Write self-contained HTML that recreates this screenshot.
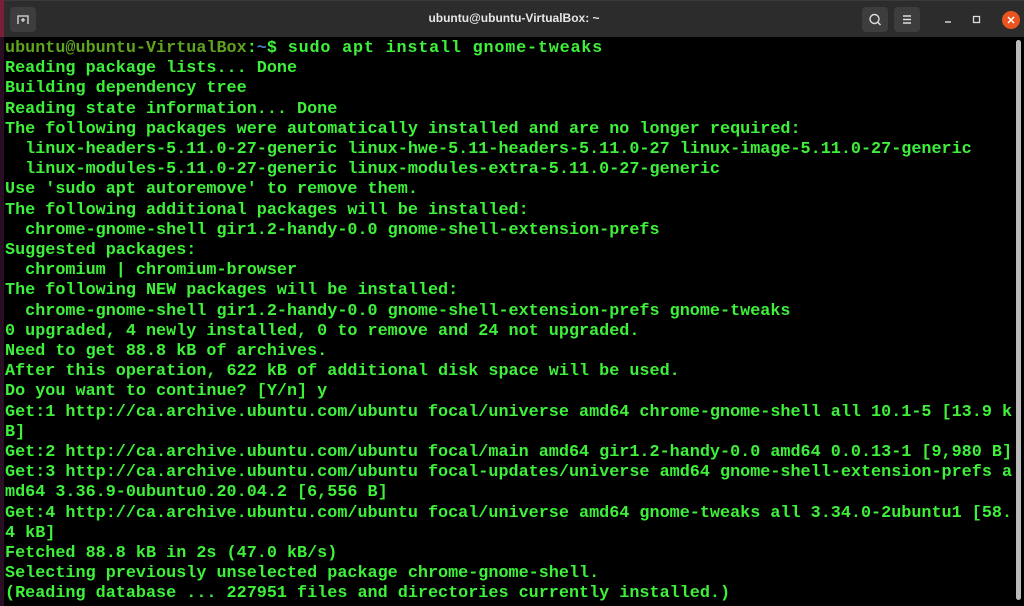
<!DOCTYPE html>
<html><head><meta charset="utf-8"><style>
html,body{margin:0;padding:0;width:1024px;height:606px;overflow:hidden;background:#000;}
.strip{position:absolute;left:0;top:0;width:4px;height:606px;background:#2a0f24;}
.strip2{position:absolute;left:0;top:0;width:4px;height:37px;background:#7a1f3a;}
.bar{position:absolute;left:4px;top:0;right:0;height:37px;background:#2c2c2c;border-top:1px solid #3a3a3a;box-sizing:border-box;}
.title{position:absolute;left:0;right:0;top:10px;text-align:center;color:#e6e6e6;font:bold 12px "Liberation Sans",sans-serif;}
.btn{position:absolute;top:6px;width:26px;height:25px;background:#3d3d3d;border-radius:4px;}
.term{position:absolute;left:5px;top:39px;margin:0;color:#3ef03a;font:bold 16.8px/20.2px "Liberation Mono",monospace;white-space:pre;}
.p{color:#5fa31f}.b{color:#4a7fc8}
.scroll{position:absolute;right:3px;top:40px;width:5px;height:560px;background:#bbb;border-radius:3px;}
</style></head><body>
<div class="strip"></div><div class="strip2"></div>
<div class="bar">
<div class="btn" style="left:6px"><svg width="26" height="25"><path d="M8 17V9h10v8M11 13h4M13 11v4" stroke="#ddd" stroke-width="1.3" fill="none"/></svg></div>
<div class="title">ubuntu@ubuntu-VirtualBox: ~</div>
<div class="btn" style="left:858px"><svg width="26" height="25"><circle cx="12.5" cy="12" r="4.5" stroke="#ddd" stroke-width="1.4" fill="none"/><path d="M15.5 15l3 3" stroke="#ddd" stroke-width="1.5"/></svg></div>
<div class="btn" style="left:890px"><svg width="26" height="25"><path d="M9 9h8M9 12.5h8M9 16h8" stroke="#ddd" stroke-width="1.4"/></svg></div>
<svg style="position:absolute;left:940px;top:8px" width="80" height="22"><path d="M1 13h6" stroke="#ddd" stroke-width="1.4"/><rect x="29.5" y="7.5" width="6" height="6" stroke="#ddd" stroke-width="1.3" fill="none"/><circle cx="67" cy="11" r="9" fill="#e95420"/><path d="M64 8l6 6M70 8l-6 6" stroke="#fff" stroke-width="1.5"/></svg>
</div>
<div class="scroll"></div>
<pre class="term"><span class="p">ubuntu@ubuntu-VirtualBox</span>:<span class="b">~</span>$<span style="letter-spacing:0.8px"> sudo apt install gnome-tweaks</span>
Reading package lists... Done
Building dependency tree
Reading state information... Done
The following packages were automatically installed and are no longer required:
  linux-headers-5.11.0-27-generic linux-hwe-5.11-headers-5.11.0-27 linux-image-5.11.0-27-generic
  linux-modules-5.11.0-27-generic linux-modules-extra-5.11.0-27-generic
Use 'sudo apt autoremove' to remove them.
The following additional packages will be installed:
  chrome-gnome-shell gir1.2-handy-0.0 gnome-shell-extension-prefs
Suggested packages:
  chromium | chromium-browser
The following NEW packages will be installed:
  chrome-gnome-shell gir1.2-handy-0.0 gnome-shell-extension-prefs gnome-tweaks
0 upgraded, 4 newly installed, 0 to remove and 24 not upgraded.
Need to get 88.8 kB of archives.
After this operation, 622 kB of additional disk space will be used.
Do you want to continue? [Y/n] y
Get:1 http://ca.archive.ubuntu.com/ubuntu focal/universe amd64 chrome-gnome-shell all 10.1-5 [13.9 k
B]
Get:2 http://ca.archive.ubuntu.com/ubuntu focal/main amd64 gir1.2-handy-0.0 amd64 0.0.13-1 [9,980 B]
Get:3 http://ca.archive.ubuntu.com/ubuntu focal-updates/universe amd64 gnome-shell-extension-prefs a
md64 3.36.9-0ubuntu0.20.04.2 [6,556 B]
Get:4 http://ca.archive.ubuntu.com/ubuntu focal/universe amd64 gnome-tweaks all 3.34.0-2ubuntu1 [58.
4 kB]
Fetched 88.8 kB in 2s (47.0 kB/s)
Selecting previously unselected package chrome-gnome-shell.
(Reading database ... 227951 files and directories currently installed.)</pre>
</body></html>
